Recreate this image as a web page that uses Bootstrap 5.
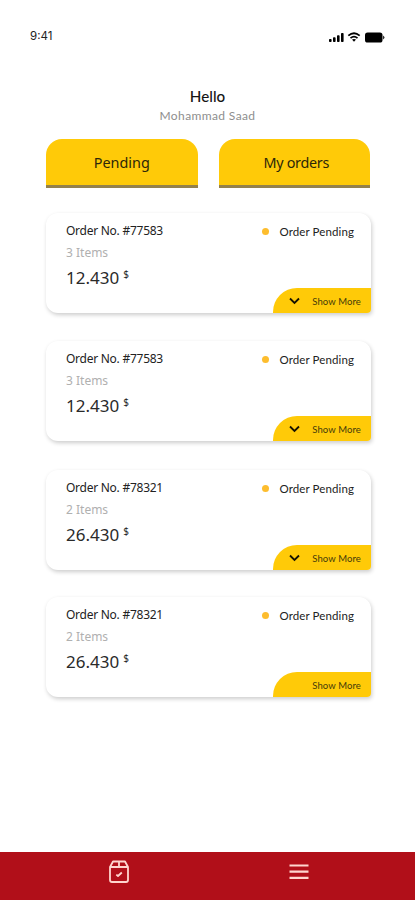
<!DOCTYPE html>
<html lang="en">
<head>
<meta charset="utf-8">
<meta name="viewport" content="width=device-width, initial-scale=1">
<title>Orders</title>
<link href="https://cdn.jsdelivr.net/npm/bootstrap@5.3.0/dist/css/bootstrap.min.css" rel="stylesheet">
<style>
body{font-family:"Noto Sans","Open Sans",sans-serif;color:#222;background:#fff;height:900px;overflow:hidden}
.status{height:73px;padding:1px 30px 0 30px;font-family:Inter,sans-serif;font-size:11.5px}
.hello{height:66px;padding-top:12px}
.hello h1{font:500 15.2px/22px Lato,sans-serif;color:#151515}
.hello p{font:12px/18px Lato,sans-serif;color:#8e8e8e;letter-spacing:.38px}
.tabs{padding:0 45px 0 46px;gap:21px;height:74px}
.tab-btn,.tab-btn:hover{height:49px;border:0;border-bottom:3px solid #94814b;border-radius:16px 16px 0 0;background:#ffca08;color:#2c2708;font-size:14.4px;padding:0;line-height:47px}
.tab-orders{letter-spacing:-.3px}
.tab-orders span{padding-left:4px}
.orders{padding:0 44px 0 46px}
.order{height:100px;border:0;border-radius:12px 12px 4px 12px;box-shadow:1px 2px 4px rgba(0,0,0,.2);overflow:hidden}
.order-1{margin-bottom:28px}
.order-2{margin-bottom:29px}
.order-3{margin-bottom:27px}
.order-body{padding:9px 17px 0 20px;min-height:0}
.num{font:12px/18px "Noto Sans",sans-serif;color:#222;letter-spacing:-.26px}
.items{font:12px/18px "Noto Sans",sans-serif;color:#b0b0b0;margin-top:4px}
.price{font:17px/24px "Noto Sans",sans-serif;color:#2a2a2a;margin-top:4px}
.cur{font-size:10px;position:relative;top:-6px;margin-left:4px}
.state{font:11.5px/19px Lato,sans-serif;color:#222;gap:11px;letter-spacing:.1px}
.dot{width:7px;height:7px;border-radius:50%;background:#fdbd2e}
.more,.more:hover{width:98px;height:25px;flex:none;border:0;border-radius:24px 0 0 0;background:#ffca08;color:#453b0b;font:9.5px/25px Lato,sans-serif;letter-spacing:.12px;padding:1px 10px 0 16px}
.bottom{height:48px;background:#b10f19;padding:7px 106px 0 108px}
.menu-icon{margin-top:4px}
</style>
</head>
<body class="d-flex flex-column">
<header class="status d-flex align-items-center justify-content-between">
  <span class="clock">9:41</span>
  <svg class="signals" width="56" height="12" viewBox="0 0 56 12" fill="#000">
    <rect x="0" y="8" width="2.6" height="3" rx=".8"/><rect x="4" y="6.3" width="2.6" height="4.7" rx=".8"/><rect x="8" y="4.3" width="2.6" height="6.7" rx=".8"/><rect x="12" y="2" width="2.6" height="9" rx=".8"/>
    <g fill="none" stroke="#000" stroke-width="1.7"><path d="M19.3 4.7Q25 -.2 30.7 4.7M21.5 7.1Q25 4.2 28.5 7.1"/></g><path d="M23 8.6Q25 7.2 27 8.6L25 10.8Z"/>
    <rect x="36" y="1.5" width="17.5" height="10" rx="2.6"/><path d="M54.2 4.5Q56.6 6.3 54.2 8.5Z"/>
  </svg>
</header>
<section class="hello text-center">
  <h1 class="mb-0">Hello</h1>
  <p class="mb-0">Mohammad Saad</p>
</section>
<nav class="tabs d-flex">
  <button class="btn tab-btn flex-fill w-50">Pending</button>
  <button class="btn tab-btn tab-orders flex-fill w-50"><span>My orders</span></button>
</nav>
<main class="orders d-flex flex-column flex-grow-1"></main>
<footer class="bottom d-flex justify-content-between">
  <svg width="22" height="26" viewBox="0 0 22 26" fill="none" stroke="#ffd5ce" stroke-width="1.8" stroke-linejoin="round"><path d="M2 8L5 2.5H17L20 8V21Q20 23 18 23H4Q2 23 2 21ZM2 8H20M11 2.5V8"/><path d="M8.3 15.6L10 17L13.8 13.5"/></svg>
  <svg class="menu-icon" width="20" height="18" viewBox="0 0 20 18" fill="none" stroke="#ffd5ce" stroke-width="2.2"><path d="M.5 2.5H19.5M.5 8.7H19.5M.5 14.8H19.5"/></svg>
</footer>
<script>
const orders=[["#77583","3","12.430",1],["#77583","3","12.430",1],["#78321","2","26.430",1],["#78321","2","26.430",0]];
document.querySelector(".orders").innerHTML=orders.map(([n,c,p,a],i)=>`
<article class="card order order-${i+1}">
  <div class="order-body d-flex justify-content-between flex-grow-1">
    <div><div class="num"><span>Order No. ${n}</span></div><div class="items"><span>${c} Items</span></div><div class="price"><span>${p}</span><span class="cur">$</span></div></div>
    <div class="state d-flex align-items-center align-self-start"><i class="dot"></i><span>Order Pending</span></div>
  </div>
  <button class="btn more d-flex align-items-center ${a?"justify-content-between":"justify-content-end"} align-self-end">${a?'<svg width="11" height="8" viewBox="0 0 11 8" fill="none" stroke="#171300" stroke-width="1.8"><path d="M1 1.5L5.5 6L10 1.5"/></svg>':""}<span>Show More</span></button>
</article>`).join("");
</script>
<script src="https://cdn.jsdelivr.net/npm/bootstrap@5.3.0/dist/js/bootstrap.bundle.min.js"></script>
</body>
</html>
